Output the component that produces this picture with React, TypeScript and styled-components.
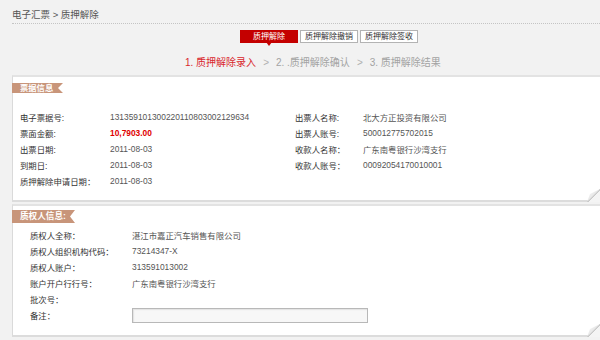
import { Fragment } from "react";
import styled, { createGlobalStyle } from "styled-components";

const GlobalStyle = createGlobalStyle`
  html, body {
    margin: 0;
    padding: 0;
    background: #f2f2f2;
  }
  body {
    font-family: "Liberation Sans", "Noto Sans CJK SC", sans-serif;
  }
`;

const Page = styled.div`
  width: 600px;
  height: 340px;
  overflow: hidden;
  padding-left: 12px;
  box-sizing: border-box;
  background: #f2f2f2;
`;

const Breadcrumb = styled.div`
  height: 24px;
  box-sizing: border-box;
  padding-top: 9px;
  font-size: 9.5px;
  line-height: 12px;
  color: #555;
  border-bottom: 1px dotted #c4c4c4;
`;

const TabBar = styled.div`
  display: flex;
  gap: 2px;
  margin: 6px 0 0 228px;
`;

const Tab = styled.div<{ $active?: boolean }>`
  position: relative;
  width: 58px;
  height: 13px;
  box-sizing: border-box;
  border: 1px solid ${(p) => (p.$active ? "#c40000" : "#b3b3b3")};
  background: ${(p) => (p.$active ? "#c40000" : "#fff")};
  color: ${(p) => (p.$active ? "#fff" : "#333")};
  font-size: 8px;
  line-height: 11px;
  text-align: center;

  &::after {
    content: "";
    display: ${(p) => (p.$active ? "block" : "none")};
    position: absolute;
    left: 50%;
    top: 100%;
    margin-left: -3px;
    border-left: 3px solid transparent;
    border-right: 3px solid transparent;
    border-top: 4px solid #c40000;
  }
`;

const Steps = styled.div`
  display: flex;
  align-items: center;
  gap: 7px;
  margin: 14px 0 0 173px;
  font-size: 10px;
  line-height: 12px;
`;

const Step = styled.span<{ $active?: boolean }>`
  color: ${(p) => (p.$active ? "#d9262c" : "#a3a3a3")};
`;

const StepArrow = styled.span`
  color: #b0b0b0;
`;

const Panel = styled.div<{ $gap: number; $pt: number; $pb: number }>`
  position: relative;
  margin-top: ${(p) => p.$gap}px;
  padding: ${(p) => p.$pt}px 0 ${(p) => p.$pb}px 0;
  background: #fff;
  border-top: 2px solid #e3e3e3;
  border-left: 1px solid #dadada;
  border-bottom: 2px solid #dcdcdc;
`;

const Ribbon = styled.div<{ $width: number; $height: number; $size: number }>`
  width: ${(p) => p.$width}px;
  height: ${(p) => p.$height}px;
  box-sizing: border-box;
  margin-left: -1px;
  padding-left: 8px;
  background: #c8957a;
  color: #fff;
  font-weight: bold;
  font-size: ${(p) => p.$size}px;
  line-height: ${(p) => p.$height}px;
  clip-path: polygon(0 0, 100% 0, calc(100% - 5px) 50%, 100% 100%, 0 100%);
`;

const BillGrid = styled.div`
  display: grid;
  grid-template-columns: 90px 185px 68px 1fr;
  grid-auto-rows: 16px;
  align-items: center;
  margin-top: 16px;
  padding-left: 7px;
  font-size: 8.4px;
`;

const PledgeGrid = styled.div`
  display: grid;
  grid-template-columns: 102px 1fr;
  grid-auto-rows: 16px;
  align-items: center;
  margin-top: 4px;
  padding-left: 17px;
  font-size: 8.4px;
`;

const Label = styled.span`
  color: #333;
  white-space: nowrap;
`;

const Value = styled.span<{ $amount?: boolean }>`
  color: ${(p) => (p.$amount ? "#e00000" : "#555")};
  font-weight: ${(p) => (p.$amount ? "bold" : "normal")};
  white-space: nowrap;
`;

const NoteInput = styled.input`
  width: 236px;
  height: 15px;
  box-sizing: border-box;
  margin: 0;
  padding: 0 3px;
  border: 1px solid #b8b8b8;
  background: #f7f7f7;
  box-shadow: inset 1px 1px 1px #e2e2e2;
  font-size: 8.4px;
`;

const FoldWrap = styled.div`
  position: absolute;
  right: 0;
  bottom: -2px;
  width: 13px;
  height: 13px;
  line-height: 0;
`;

const Fold = () => (
  <FoldWrap>
    <svg width="13" height="13" viewBox="0 0 13 13">
      <defs>
        <linearGradient id="flap" x1="0" y1="0" x2="1" y2="1">
          <stop offset="0" stopColor="#ffffff" />
          <stop offset="0.5" stopColor="#e6e6e6" />
          <stop offset="1" stopColor="#a9a9a9" />
        </linearGradient>
      </defs>
      <polygon points="13,0 13,13 0,13" fill="#f4f4f4" />
      <polygon points="0,13 13,0 13,1 1,13" fill="#9c9c9c" />
      <polygon points="0,13 3,5 13,0" fill="url(#flap)" />
    </svg>
  </FoldWrap>
);

const billRows: [string, string, string, string, boolean?][] = [
  ["电子票据号:", "131359101300220110803002129634", "出票人名称:", "北大方正投资有限公司"],
  ["票面金额:", "10,7903.00", "出票人账号:", "500012775702015", true],
  ["出票日期:", "2011-08-03", "收款人名称：", "广东南粤银行沙湾支行"],
  ["到期日:", "2011-08-03", "收款人账号：", "00092054170010001"],
  ["质押解除申请日期：", "2011-08-03", "", ""],
];

const pledgeRows: [string, string][] = [
  ["质权人全称：", "湛江市嘉正汽车销售有限公司"],
  ["质权人组织机构代码：", "73214347-X"],
  ["质权人账户：", "313591013002"],
  ["账户开户行行号：", "广东南粤银行沙湾支行"],
  ["批次号：", ""],
];

const App = () => {
  return (
    <Page>
      <GlobalStyle />
      <Breadcrumb>电子汇票 &gt; 质押解除</Breadcrumb>
      <TabBar>
        <Tab $active>质押解除</Tab>
        <Tab>质押解除撤销</Tab>
        <Tab>质押解除签收</Tab>
      </TabBar>
      <Steps>
        <Step $active>1. 质押解除录入</Step>
        <StepArrow>&gt;</StepArrow>
        <Step>2. .质押解除确认</Step>
        <StepArrow>&gt;</StepArrow>
        <Step>3. 质押解除结果</Step>
      </Steps>

      <Panel $gap={6} $pt={6} $pb={11}>
        <Ribbon $width={51} $height={10} $size={8.3}>
          票据信息
        </Ribbon>
        <BillGrid>
          {billRows.map(([l1, v1, l2, v2, amount]) => (
            <Fragment key={l1}>
              <Label>{l1}</Label>
              <Value $amount={amount}>{v1}</Value>
              <Label>{l2}</Label>
              <Value>{v2}</Value>
            </Fragment>
          ))}
        </BillGrid>
        <Fold />
      </Panel>

      <Panel $gap={2} $pt={4} $pb={12}>
        <Ribbon $width={63} $height={13} $size={8.6}>
          质权人信息:
        </Ribbon>
        <PledgeGrid>
          {pledgeRows.map(([l, v]) => (
            <Fragment key={l}>
              <Label>{l}</Label>
              <Value>{v}</Value>
            </Fragment>
          ))}
          <Label>备注：</Label>
          <NoteInput type="text" />
        </PledgeGrid>
        <Fold />
      </Panel>
    </Page>
  );
};

export default App;
